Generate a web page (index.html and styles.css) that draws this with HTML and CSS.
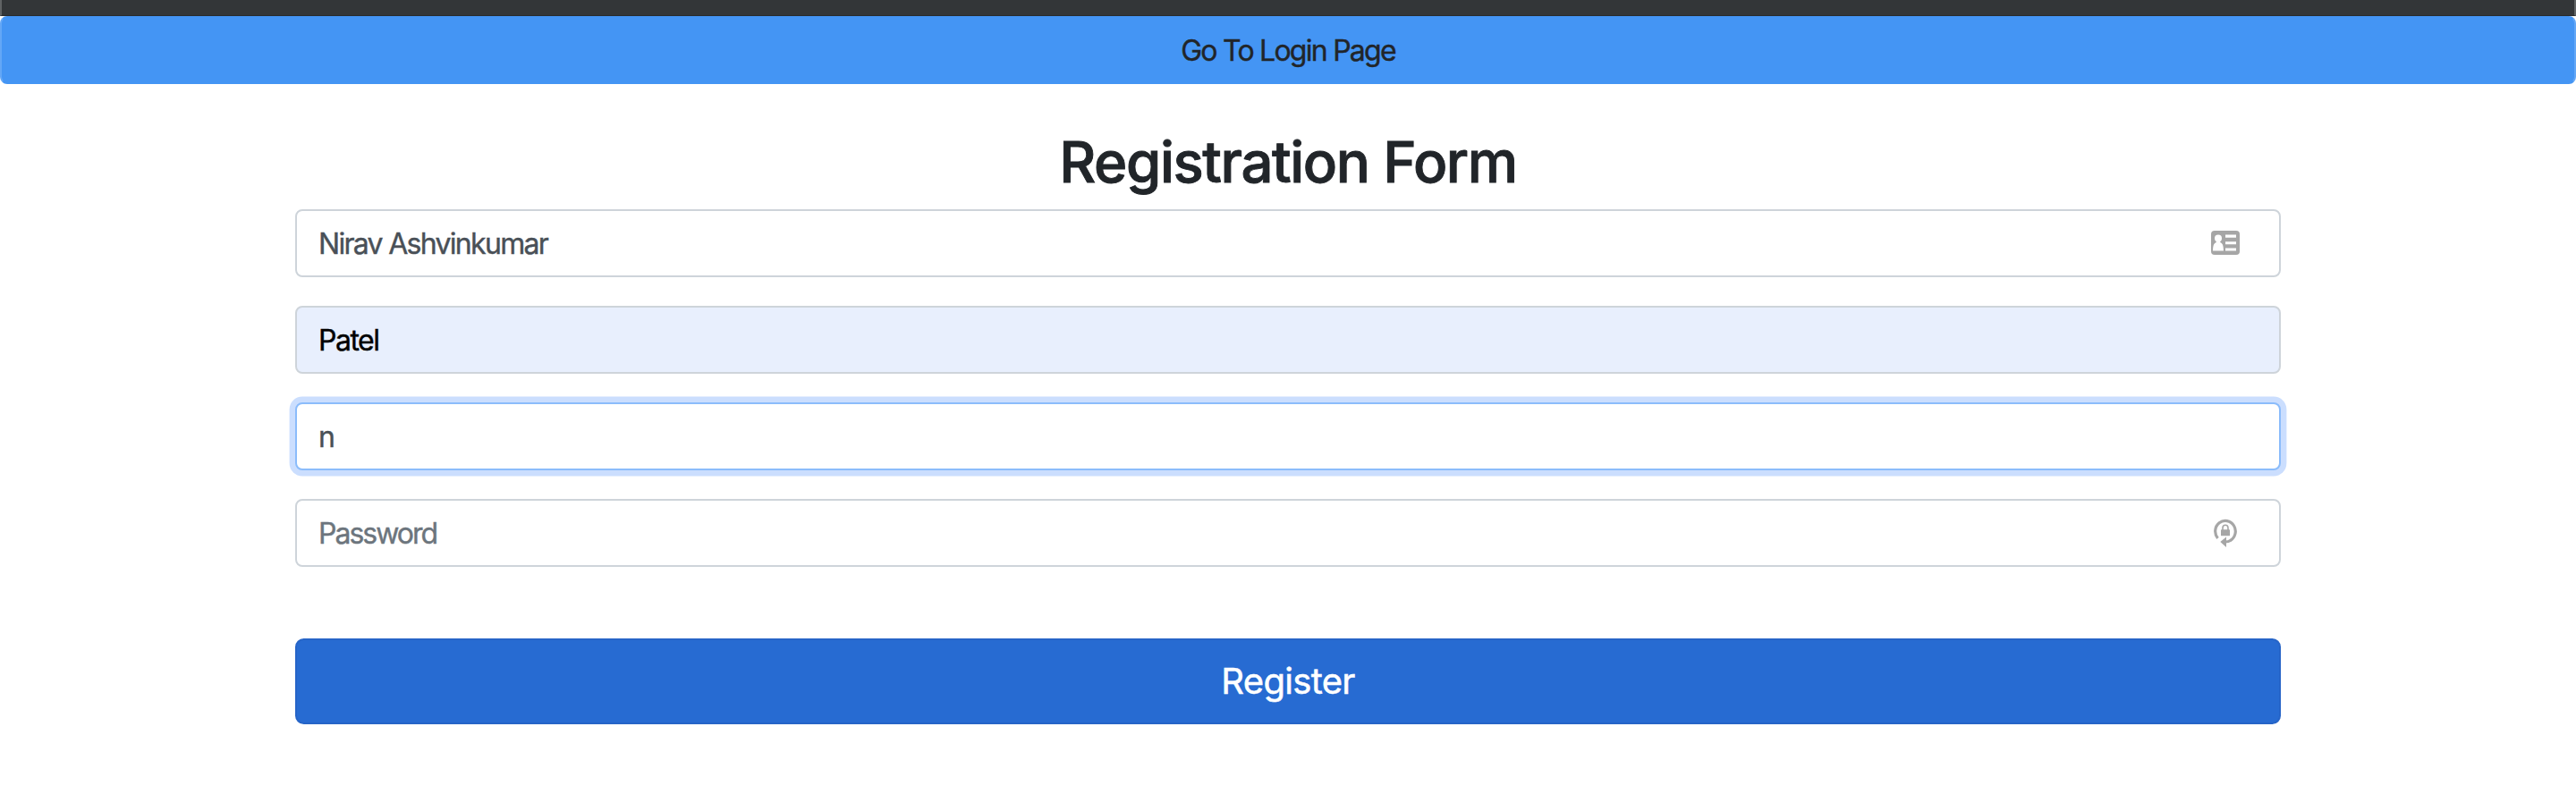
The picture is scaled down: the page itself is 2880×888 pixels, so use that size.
FILE: index.html
```html
<!DOCTYPE html>
<html lang="en">
<head>
<meta charset="utf-8">
<title>Registration Form</title>
<link rel="stylesheet" href="styles.css">
</head>
<body>
<div class="topbar"></div>
<button class="login-link" type="button">Go To Login Page</button>
<main class="container">
  <h2 class="title">Registration Form</h2>
  <form class="form">
    <div class="field">
      <input class="control" type="text" value="Nirav Ashvinkumar" aria-label="First name">
      <svg class="icon icon-card" viewBox="0 0 32 27" width="32" height="27">
        <rect width="32" height="27" rx="4" fill="#a6a6a6"/>
        <g fill="#fff">
          <circle cx="8" cy="8.5" r="4"/>
          <path d="M5.8 11h4.400v2c2.400 1 3.600 2.600 3.800 9.600H2C2.200 15.600 3.400 14 5.800 13z"/>
          <path d="M16 4.500h12v3.300H16zM16 12.300h12v2.900H16zM16 19.500h12v3.100H16z"/>
        </g>
      </svg>
    </div>
    <div class="field">
      <input class="control filled" type="text" value="Patel" aria-label="Last name">
    </div>
    <div class="field">
      <input class="control focused" type="text" value="n" aria-label="Username">
    </div>
    <div class="field">
      <input class="control password" type="password" placeholder="Password" aria-label="Password">
      <svg class="icon icon-lock" viewBox="0 0 26 34" width="26" height="34">
        <path d="M4.500 23A11.300 11.800 0 1 1 18.500 25.500Q16.500 27 13 27" fill="none" stroke="#a6a6a6" stroke-width="3.200"/>
        <path d="M7.300 27L14 21.600V33z" fill="#a6a6a6"/>
        <rect x="8" y="13.300" width="10" height="7" rx=".6" fill="#a6a6a6"/>
        <path d="M10 14v-2.500a3 3.200 0 0 1 6 0V14" fill="none" stroke="#a6a6a6" stroke-width="1.600"/>
      </svg>
    </div>
    <button class="submit" type="button">Register</button>
  </form>
</main>
</body>
</html>
```
FILE: styles.css
```css
* {
  box-sizing: border-box;
}

body {
  margin: 0;
  background: #fff;
  color: #212529;
  font-family: Inter, Roboto, "Liberation Sans", sans-serif;
}

.topbar {
  height: 18px;
  background: #333638;
  border-bottom: 1px solid #292c2e;
  border-left: 2px solid #606364;
  border-right: 2px solid #606364;
}

.login-link {
  display: block;
  width: 100%;
  height: 76px;
  padding: 2px 0 0;
  border: 2px solid #4495f4;
  border-left-color: #63a7f6;
  border-right-color: #63a7f6;
  border-radius: 8px;
  background: #4495f4;
  color: #212529;
  font: 400 32px/48px Inter, Roboto, sans-serif;
  letter-spacing: -1.75px;
  -webkit-text-stroke: .4px;
}

.container {
  width: 2220px;
  margin: 0 auto;
  padding-top: 49px;
}

.title {
  margin: 0 0 15px;
  font-size: 63.500px;
  font-weight: 500;
  line-height: 76px;
  letter-spacing: -1.400px;
  text-align: center;
  -webkit-text-stroke: .9px;
}

.form {
  display: flex;
  flex-direction: column;
  gap: 32px;
}

.field {
  position: relative;
  display: flex;
}

.control {
  width: 100%;
  height: 76px;
  padding: 12px 24px;
  border: 2px solid #ced4da;
  border-radius: 8px;
  outline: none;
  background: #fff;
  color: #495057;
  font: 400 32px/48px Inter, Roboto, sans-serif;
  letter-spacing: -1.700px;
  -webkit-text-stroke: .4px;
}

.control::placeholder {
  color: #6c757d;
  opacity: 1;
}

.filled {
  background: #e8effd;
  color: #000;
  letter-spacing: -1.500px;
}

.password {
  letter-spacing: -2px;
}

.focused {
  border-color: #8bbcfb;
  box-shadow: 0 0 0 6.400px #cbdefe;
}

.icon {
  position: absolute;
}

.icon-card {
  right: 46px;
  top: 24px;
}

.icon-lock {
  right: 49px;
  top: 21px;
}

.submit {
  height: 96px;
  margin-top: 48px;
  padding: 0;
  border: 2px solid #2664c7;
  border-radius: 9.600px;
  background: #276bd2;
  color: #fff;
  font: 400 40px/60px Inter, Roboto, sans-serif;
  letter-spacing: -.7px;
  -webkit-text-stroke: .5px;
}
```
